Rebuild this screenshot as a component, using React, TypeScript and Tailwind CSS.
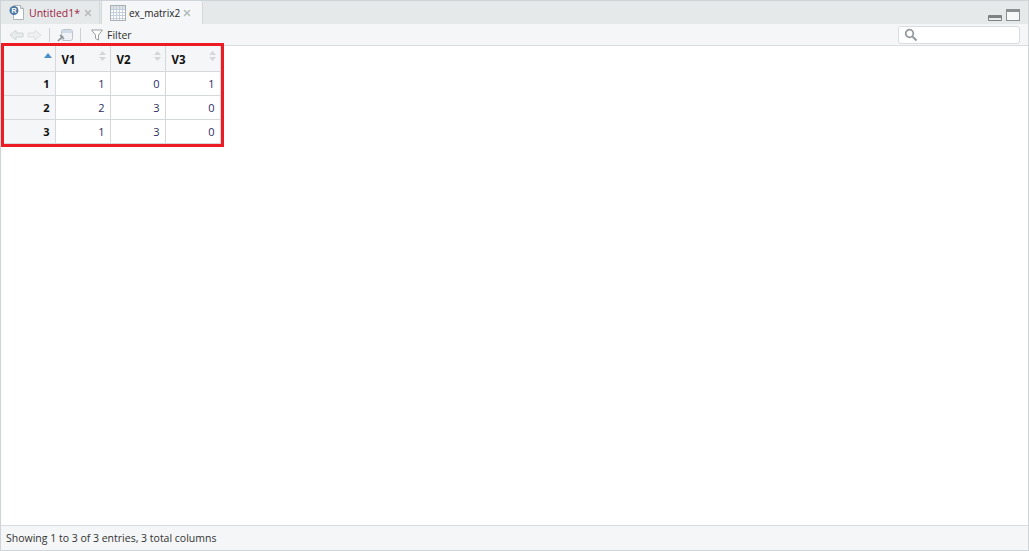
import { X } from "lucide-react";

const rows = [
  [1, 1, 0, 1],
  [2, 2, 3, 0],
  [3, 1, 3, 0],
];

function DocIcon() {
  return (
    <svg width="16" height="17" viewBox="0 0 16 17" className="shrink-0">
      <path d="M4.5 1.5h7l3 3v11h-10z" fill="#fff" stroke="#aeb5b9" />
      <path d="M11.5 1.5v3h3" fill="#e4e7e9" stroke="#aeb5b9" />
      <circle cx="5" cy="6.5" r="4.5" fill="#4f7aa6" />
      <text x="5" y="9" fontSize="7" fontWeight="700" fill="#fff" textAnchor="middle" fontFamily="Liberation Sans, sans-serif">
        R
      </text>
    </svg>
  );
}

function GridIcon() {
  return (
    <svg width="16" height="16" viewBox="0 0 16 16" className="shrink-0">
      <rect x="0.5" y="0.5" width="15" height="15" fill="#fff" stroke="#a9b0b4" />
      <rect x="1" y="1" width="14" height="3" fill="#dde1e4" />
      <path d="M1 4.5h14M1 7.5h14M1 10.5h14M1 13.5h14M3.5 1v14M6.5 1v14M9.5 1v14M12.5 1v14" stroke="#c3cfdc" fill="none" />
    </svg>
  );
}

function SortArrows() {
  return (
    <svg width="7" height="10" viewBox="0 0 7 10" className="absolute top-[5px] right-[4px]">
      <path d="M3.5 0L7 4H0z" fill="#d3d7d9" />
      <path d="M3.5 10L7 6H0z" fill="#d3d7d9" />
    </svg>
  );
}

export default function App() {
  return (
    <div className="relative flex h-[551px] w-[1029px] flex-col overflow-hidden border border-[#ced4d7] bg-white font-['Open_Sans',sans-serif] text-[10.5px] text-[#333]">
      {/* tab strip */}
      <div className="flex h-[23px] shrink-0 items-end bg-[#e6e9ea]">
        <div className="flex h-[23px] w-[99px] items-center border-r border-[#d3d8da] pl-[8px]">
          <DocIcon />
          <span className="ml-[4px] pt-[2px] text-[#9b1d43]">Untitled1*</span>
          <X size={10} strokeWidth={3.5} className="ml-[3px] text-[#b4b9bc]" />
        </div>
        <div className="ml-[1px] flex h-[23px] w-[102px] items-center rounded-t-[2px] border-x border-[#d3d8da] bg-[#f4f6f7] pl-[8px]">
          <GridIcon />
          <span className="ml-[3px] pt-[2px] text-[10px] text-[#222]">ex_matrix2</span>
          <X size={10} strokeWidth={3.5} className="ml-[2px] text-[#b4b9bc]" />
        </div>
        <div className="ml-auto mr-[8px] flex items-end gap-[4px] pb-[3px]">
          <div className="h-[6px] w-[14px] rounded-[1px] border border-[#7d8285] border-t-[3px] bg-[#e8eaeb]" />
          <div className="h-[12px] w-[14px] border border-[#8a8f92] border-t-[3px] bg-[#f7f8f8]" />
        </div>
      </div>

      {/* toolbar */}
      <div className="flex h-[22px] shrink-0 items-center border-b border-[#d7dcde] bg-[#f4f6f7]">
        <svg width="34" height="14" viewBox="0 0 34 14" className="ml-[8px] shrink-0">
          <path d="M1 7l6-5v3h7v4H7v3z" fill="#e9eced" stroke="#d2d6d8" />
          <path d="M32 7l-6-5v3h-7v4h7v3z" fill="#eef0f1" stroke="#dde0e2" />
        </svg>
        <div className="ml-[6px] h-[14px] w-px bg-[#ccd1d4]" />
        <svg width="16" height="14" viewBox="0 0 16 14" className="ml-[7px] shrink-0">
          <rect x="4.5" y="1.5" width="11" height="11" rx="2" fill="#eef2f6" stroke="#bcc2c6" />
          <rect x="5" y="2" width="10" height="3" fill="#cfdbe8" />
          <path d="M1 13l5-5M3 7l4 4" stroke="#8d9499" strokeWidth="1.6" fill="none" />
        </svg>
        <div className="ml-[7px] h-[14px] w-px bg-[#ccd1d4]" />
        <svg width="12" height="12" viewBox="0 0 12 12" className="ml-[10px] shrink-0">
          <path d="M0.5 1h11L7.5 6v5l-3-1.5V6z" fill="#fff" stroke="#9aa0a3" />
        </svg>
        <span className="ml-[4px] pt-[2px] text-[#333]">Filter</span>
        <div className="ml-auto mr-[8px] flex h-[18px] w-[122px] items-center rounded-[3px] border border-[#d9dddf] bg-white pl-[5px]">
          <svg width="14" height="14" viewBox="0 0 14 14">
            <circle cx="5.5" cy="5.5" r="3.8" fill="none" stroke="#949a9d" strokeWidth="1.8" />
            <path d="M8.5 8.5l4 4" stroke="#949a9d" strokeWidth="2.2" />
          </svg>
        </div>
      </div>

      {/* data grid */}
      <div className="flex-1 pl-[3px]">
        <table className="table-fixed border-collapse">
          <thead>
            <tr className="h-[25px] border-b border-[#d5d9db] bg-[#f4f6f7] font-bold text-[#111]">
              <th className="relative w-[51px] border-r border-[#d5d9db]">
                <svg width="8" height="5" viewBox="0 0 8 5" className="absolute top-[7px] right-[3px]">
                  <path d="M4 0l4 5H0z" fill="#4a90c8" />
                </svg>
              </th>
              {["V1", "V2", "V3"].map((name) => (
                <th key={name} className="relative w-[55px] border-r border-[#d5d9db] pt-[2px] pl-[6px] text-left text-[11.5px] font-bold">
                  {name}
                  <SortArrows />
                </th>
              ))}
            </tr>
          </thead>
          <tbody>
            {rows.map((row) => (
              <tr key={row[0]} className="h-[24px] border-b border-[#d5d9db] text-[11px]">
                <td className="border-r border-[#d5d9db] bg-[#f4f6f7] pt-[2px] pr-[5px] text-right font-bold text-[#111]">{row[0]}</td>
                {row.slice(1).map((value, i) => (
                  <td key={i} className="border-r border-[#d5d9db] pt-[2px] pr-[5px] text-right text-[#2d2d5f]">
                    {value}
                  </td>
                ))}
              </tr>
            ))}
          </tbody>
        </table>
      </div>

      {/* status bar */}
      <div className="flex h-[25px] shrink-0 items-center border-t border-[#d7dcde] bg-[#f4f6f7] pt-[2px] pl-[5px] text-[#333]">
        Showing 1 to 3 of 3 entries, 3 total columns
      </div>

      {/* red annotation round the table */}
      <div className="absolute top-[42px] left-0 h-[104px] w-[223px] border-[3px] border-[#ed1c24]" />
    </div>
  );
}
